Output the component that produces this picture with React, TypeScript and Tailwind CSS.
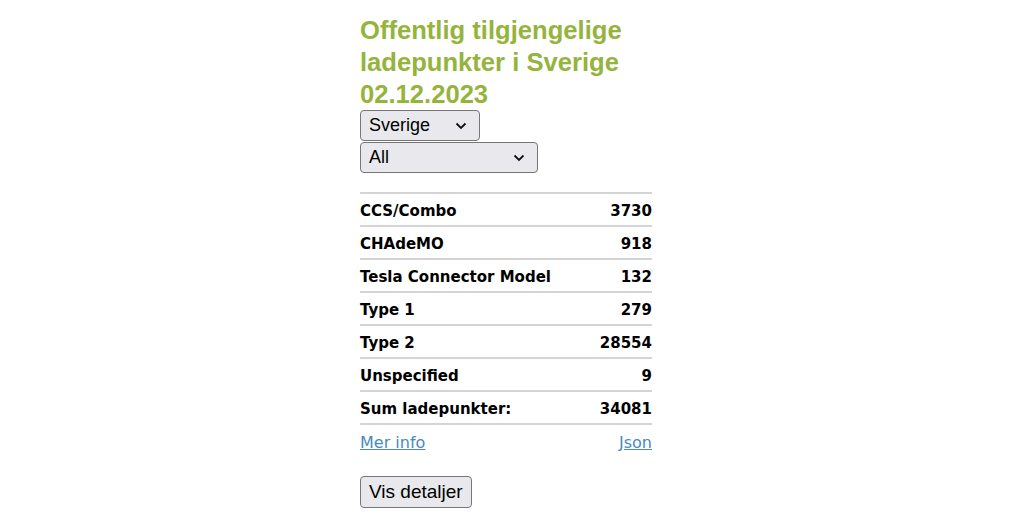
import React from 'react';

const rows = [
  { label: 'CCS/Combo', value: 3730 },
  { label: 'CHAdeMO', value: 918 },
  { label: 'Tesla Connector Model', value: 132 },
  { label: 'Type 1', value: 279 },
  { label: 'Type 2', value: 28554 },
  { label: 'Unspecified', value: 9 },
  { label: 'Sum ladepunkter:', value: 34081 },
];

const Chevron = () => (
  <svg width="12" height="8" viewBox="0 0 12 8" fill="none" stroke="#111" strokeWidth="1.8">
    <path d="M1.5 1.5 6 6l4.5-4.5" />
  </svg>
);

const Select = ({ label, width }: { label: string; width: string }) => (
  <div
    className={`flex items-center justify-between ${width} h-[31px] pl-[8px] pr-[12px] border border-[#767676] rounded-[4px] bg-[#e9e9ed] text-[18px] text-black font-['Liberation_Sans',Arial,sans-serif]`}
  >
    <span>{label}</span>
    <Chevron />
  </div>
);

export default function App() {
  return (
    <div className="min-h-[526px] bg-white">
      <div className="w-[304px] mx-auto pt-[14px]">
        <h1 className="text-[25.6px] leading-[32px] font-bold text-[#95b43c] font-['Liberation_Sans',Arial,sans-serif]">
          Offentlig tilgjengelige ladepunkter i Sverige 02.12.2023
        </h1>
        <div className="flex flex-col gap-[1px]">
          <Select label="Sverige" width="w-[120px]" />
          <Select label="All" width="w-[178px]" />
        </div>

        <div className="w-[292px] mt-[19px] font-['DejaVu_Sans',sans-serif] text-[15px] text-black">
          <div className="border-t-2 border-[#d4d4d4]" />
          {rows.map((r) => (
            <div key={r.label} className="flex justify-between items-center h-[33px] border-b-2 border-[#d4d4d4] font-bold pt-[3px]">
              <span>{r.label}</span>
              <span>{r.value}</span>
            </div>
          ))}
          <div className="flex justify-between items-center h-[33px] pt-[2px] text-[16px] text-[#4a8ac0]">
            <a href="#" className="underline">Mer info</a>
            <a href="#" className="underline">Json</a>
          </div>
        </div>

        <button className="mt-[18px] h-[32px] px-[8px] border border-[#767676] rounded-[4px] bg-[#e9e9ed] text-[19px] text-black font-['Liberation_Sans',Arial,sans-serif]">
          Vis detaljer
        </button>
      </div>
    </div>
  );
}
